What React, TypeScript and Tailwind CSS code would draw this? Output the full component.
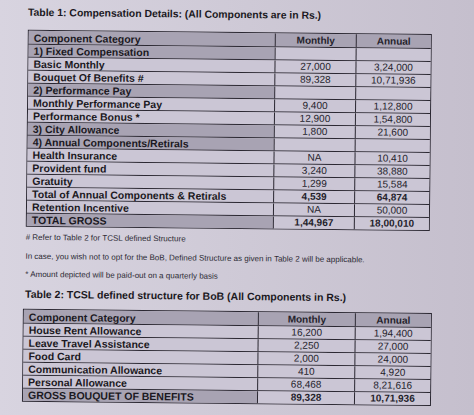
import React from "react";

type Row = { label: string; m?: string; a?: string; section?: boolean; header?: boolean; bold?: boolean };

const T1: Row[] = [
  { label: "Component Category", m: "Monthly", a: "Annual", header: true },
  { label: "1) Fixed Compensation", section: true },
  { label: "Basic Monthly", m: "27,000", a: "3,24,000" },
  { label: "Bouquet Of Benefits #", m: "89,328", a: "10,71,936" },
  { label: "2) Performance Pay", section: true },
  { label: "Monthly Performance Pay", m: "9,400", a: "1,12,800" },
  { label: "Performance Bonus *", m: "12,900", a: "1,54,800" },
  { label: "3) City Allowance", section: true, m: "1,800", a: "21,600" },
  { label: "4) Annual Components/Retirals", section: true },
  { label: "Health Insurance", m: "NA", a: "10,410" },
  { label: "Provident fund", m: "3,240", a: "38,880" },
  { label: "Gratuity", m: "1,299", a: "15,584" },
  { label: "Total of Annual Components & Retirals", m: "4,539", a: "64,874", bold: true },
  { label: "Retention Incentive", m: "NA", a: "50,000" },
  { label: "TOTAL GROSS", section: true, m: "1,44,967", a: "18,00,010", bold: true },
];

const T2: Row[] = [
  { label: "Component Category", m: "Monthly", a: "Annual", header: true },
  { label: "House Rent Allowance", m: "16,200", a: "1,94,400" },
  { label: "Leave Travel Assistance", m: "2,250", a: "27,000" },
  { label: "Food Card", m: "2,000", a: "24,000" },
  { label: "Communication Allowance", m: "410", a: "4,920" },
  { label: "Personal Allowance", m: "68,468", a: "8,21,616" },
  { label: "GROSS BOUQUET OF BENEFITS", section: true, m: "89,328", a: "10,71,936", bold: true },
];

function Table({ rows, c1, c2, c3 }: { rows: Row[]; c1: string; c2: string; c3: string }) {
  return (
    <div className="border border-[#2a2731] flex flex-col">
      {rows.map((r, i) => {
        const shadedLeft = r.header || r.section;
        return (
          <div key={i} className={`flex h-[13px] ${i > 0 ? "border-t border-[#2a2731]" : ""}`}>
            <div
              className={`${c1} shrink-0 flex items-end pl-[5px] text-[10.5px] leading-[12px] font-bold text-[#1b1922] ${
                shadedLeft ? "bg-[#a8a3b3]" : "bg-[#cbc6d5]"
              }`}
            >
              <span className="whitespace-nowrap">{r.label}</span>
            </div>
            <div
              className={`${c2} shrink-0 border-l border-[#2a2731] flex items-end justify-center text-[10px] leading-[12px] text-[#24222b] ${
                r.header ? "bg-[#a8a3b3] font-bold" : "bg-[#cbc6d5]"
              } ${r.bold ? "font-bold" : ""}`}
            >
              {r.m}
            </div>
            <div
              className={`${c3} shrink-0 border-l border-[#2a2731] flex items-end justify-center text-[10px] leading-[12px] text-[#24222b] ${
                r.header ? "bg-[#a8a3b3] font-bold" : "bg-[#cbc6d5]"
              } ${r.bold ? "font-bold" : ""}`}
            >
              {r.a}
            </div>
          </div>
        );
      })}
    </div>
  );
}

export default function App() {
  return (
    <div
      className="w-[474px] h-[415px] overflow-hidden bg-gradient-to-r from-[#d8d4e0] to-[#c5bfcd]"
      style={{ fontFamily: '"Liberation Sans", Arial, sans-serif' }}
    >
      <div className="w-[474px] h-[415px] rotate-[0.6deg] pl-[26px] pt-[8px] flex flex-col items-start">
        <div className="h-[14px] leading-[14px] text-[10.4px] font-bold text-[#1b1922] whitespace-nowrap">
          Table 1: Compensation Details: (All Components are in Rs.)
        </div>
        <div className="mt-[10px] w-[404px]">
          <Table rows={T1} c1="w-[246px]" c2="w-[81px]" c3="w-[75px]" />
        </div>
        <div className="mt-[6px] h-[10px] leading-[10px] text-[8px] text-[#2c2a33] whitespace-nowrap">
          # Refer to Table 2 for TCSL defined Structure
        </div>
        <div className="mt-[9px] h-[10px] leading-[10px] text-[8px] text-[#2c2a33] whitespace-nowrap">
          In case, you wish not to opt for the BoB, Defined Structure as given in Table 2 will be applicable.
        </div>
        <div className="mt-[8px] h-[10px] leading-[10px] text-[8px] text-[#2c2a33] whitespace-nowrap">
          * Amount depicted will be paid-out on a quarterly basis
        </div>
        <div className="mt-[7px] h-[14px] leading-[14px] text-[10.5px] font-bold text-[#1b1922] whitespace-nowrap">
          Table 2: TCSL defined structure for BoB (All Components in Rs.)
        </div>
        <div className="mt-[8px] -ml-[2px] w-[409px]">
          <Table rows={T2} c1="w-[234px]" c2="w-[97px]" c3="w-[76px]" />
        </div>
      </div>
    </div>
  );
}
